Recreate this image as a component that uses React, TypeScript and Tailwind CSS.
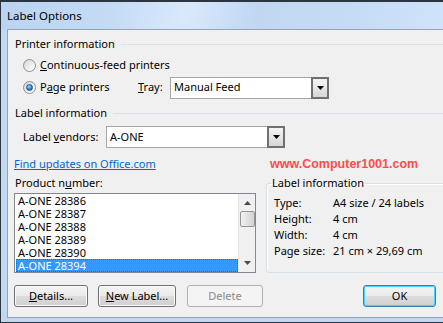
import React from 'react';

const font = { fontFamily: '"Segoe UI", "Noto Sans", sans-serif' };

function Radio({ checked }: { checked?: boolean }) {
  return (
    <span className="w-[13px] h-[13px] rounded-full border border-[#8c8f94] bg-[linear-gradient(135deg,#d2d4d6,#f8f9fa_75%)] flex items-center justify-center shrink-0">
      {checked && (
        <span className="w-[7px] h-[7px] rounded-full border border-[#1c5180] bg-[radial-gradient(circle_at_35%_30%,#a6dcff,#2f86d6_55%,#15539a)]" />
      )}
    </span>
  );
}

function Select({ value, className }: { value: string; className: string }) {
  return (
    <div className={`h-[22px] shrink-0 flex items-stretch bg-white border border-[#a6a6a6] ${className}`}>
      <span className="flex-1 flex items-center pl-[3px] text-black">{value}</span>
      <span className="w-[18px] border-2 border-[#707070] bg-[linear-gradient(#f4f4f4,#e6e6e6_50%,#d6d6d6)] flex items-center justify-center -my-px -mr-px">
        <svg width="7" height="4" viewBox="0 0 7 4">
          <polygon points="0,0 7,0 3.5,4" fill="#000" />
        </svg>
      </span>
    </div>
  );
}

function Header({ title }: { title: string }) {
  return (
    <div className="h-4 flex items-center pl-[7px]">
      <span className="text-black leading-4">{title}</span>
      <span className="flex-1 h-px bg-[#dbe2ea] ml-[6px]" />
    </div>
  );
}

function Btn({ children, w, disabled, primary }: { children: React.ReactNode; w: string; disabled?: boolean; primary?: boolean }) {
  let cls = 'border-[#707070] bg-[linear-gradient(#f3f3f3,#ebebeb_48%,#dddddd_52%,#cfcfcf)] text-black shadow-[inset_0_0_0_1px_#fbfbfb]';
  if (disabled) cls = 'border-[#adb2b5] bg-[#f4f4f4] text-[#8a8a8a]';
  if (primary) cls = 'border-[#3c7fb1] bg-[linear-gradient(#f3f3f3,#ebebeb_48%,#dddddd_52%,#cfcfcf)] text-black shadow-[inset_0_0_0_1px_#48d3fb]';
  return (
    <div className={`h-[22px] shrink-0 rounded-[3px] border flex items-center justify-center ${cls} ${w}`}>
      {children}
    </div>
  );
}

const products = ['A-ONE 28386', 'A-ONE 28387', 'A-ONE 28388', 'A-ONE 28389', 'A-ONE 28390', 'A-ONE 28394'];

const info = [
  ['Type:', 'A4 size / 24 labels'],
  ['Height:', '4 cm'],
  ['Width:', '4 cm'],
  ['Page size:', '21 cm × 29,69 cm'],
];

export default function App() {
  return (
    <div
      className="w-[443px] h-[323px] flex flex-col bg-[#c2d8f2] border-t-2 border-l border-b border-[#2c3440] pb-[4px] overflow-hidden text-[11px]"
      style={font}
    >
      {/* title bar */}
      <div className="h-[27px] shrink-0 flex items-center pl-[7px] bg-[linear-gradient(100deg,#b9d3f1_0%,#c4dbf5_25%,#d9e9fb_42%,#c0d7f2_58%,#c6dcf6_80%,#cfe3f9_100%)] -ml-px">
        <span className="text-[11.5px] text-black">Label Options</span>
      </div>

      {/* body */}
      <div className="flex-1 flex pl-[6px] bg-[#c2d8f2]">
        <div className="flex-1 flex flex-col bg-[#f0f0f0] border-l border-t border-b border-[#97a3b0] overflow-hidden text-black">
          <div className="mt-[6px]">
            <Header title="Printer information" />
          </div>

          <div className="mt-[2px] h-[22px] flex items-center pl-[15px]">
            <Radio />
            <span className="ml-[4px]"><u>C</u>ontinuous-feed printers</span>
          </div>

          <div className="h-[23px] flex items-center pl-[15px]">
            <div className="w-[115px] shrink-0 flex items-center">
              <Radio checked />
              <span className="ml-[4px]">P<u>a</u>ge printers</span>
            </div>
            <span className="w-[32px] shrink-0"><u>T</u>ray:</span>
            <Select value="Manual Feed" className="w-[159px]" />
          </div>

          <div className="mt-[6px]">
            <Header title="Label information" />
          </div>

          <div className="mt-[5px] h-[22px] flex items-center pl-[15px]">
            <span className="w-[83px] shrink-0">Label <u>v</u>endors:</span>
            <Select value="A-ONE" className="w-[179px]" />
          </div>

          <div className="mt-[8px] h-4 flex items-center pl-[6px]">
            <span className="w-[256px] shrink-0 text-[#0066cc] underline">Find updates on Office.com</span>
            <span
              className="shrink-0 text-[#ff4b4b] font-bold text-[12.5px]"
              style={{ fontFamily: '"Liberation Sans", Arial, sans-serif' }}
            >
              www.Computer1001.com
            </span>
          </div>

          <div className="flex pl-[6px] mt-[3px]">
            <div className="w-[242px] shrink-0 flex flex-col">
              <div className="h-4 pl-[1px] flex items-center">Product n<u>u</u>mber:</div>
              <div className="mt-[2px] h-[80px] border border-[#828790] bg-white flex">
                <div className="flex-1 flex flex-col">
                  {products.map((p, i) => (
                    <div
                      key={p}
                      className={`h-[13px] leading-[13px] pl-[2px] ml-px ${
                        i === products.length - 1 ? 'bg-[#3399ff] text-white outline-1 outline-dotted outline-[#7a5a2a] -outline-offset-1' : ''
                      }`}
                    >
                      {p}
                    </div>
                  ))}
                </div>
                <div className="w-[17px] bg-[#f0f0f0] border-l border-[#e6e6e6] flex flex-col items-center">
                  <svg className="mt-[7px]" width="7" height="4" viewBox="0 0 7 4">
                    <polygon points="3.5,0 7,4 0,4" fill="#4a4a4a" />
                  </svg>
                  <div className="mt-[6px] w-[15px] h-[16px] rounded-[2px] border border-[#959595] bg-[linear-gradient(90deg,#f2f2f2,#e2e2e2_50%,#d2d2d2)]" />
                  <div className="flex-1" />
                  <svg className="mb-[7px]" width="7" height="4" viewBox="0 0 7 4">
                    <polygon points="0,0 7,0 3.5,4" fill="#4a4a4a" />
                  </svg>
                </div>
              </div>
            </div>

            <fieldset className="ml-[10px] w-[190px] shrink-0 border border-[#d5dfe5] rounded-[3px] pb-[12px] shadow-[inset_1px_1px_0_#fff]">
              <legend className="ml-[4px] px-[1px] leading-4">Label information</legend>
              <div className="mt-[4px] flex flex-col pl-[7px]">
                {info.map(([k, v]) => (
                  <div key={k} className="h-4 flex items-center">
                    <span className="w-[59px] shrink-0">{k}</span>
                    <span>{v}</span>
                  </div>
                ))}
              </div>
            </fieldset>
          </div>

          <div className="mt-[12px] flex items-center pl-[6px]">
            <Btn w="w-[74px]"><u>D</u>etails...</Btn>
            <div className="ml-[10px] shrink-0"><Btn w="w-[78px]"><u>N</u>ew Label...</Btn></div>
            <div className="ml-[11px] shrink-0"><Btn w="w-[76px]" disabled>Delete</Btn></div>
            <div className="ml-[100px] shrink-0"><Btn w="w-[73px]" primary>OK</Btn></div>
          </div>
        </div>
      </div>
    </div>
  );
}
